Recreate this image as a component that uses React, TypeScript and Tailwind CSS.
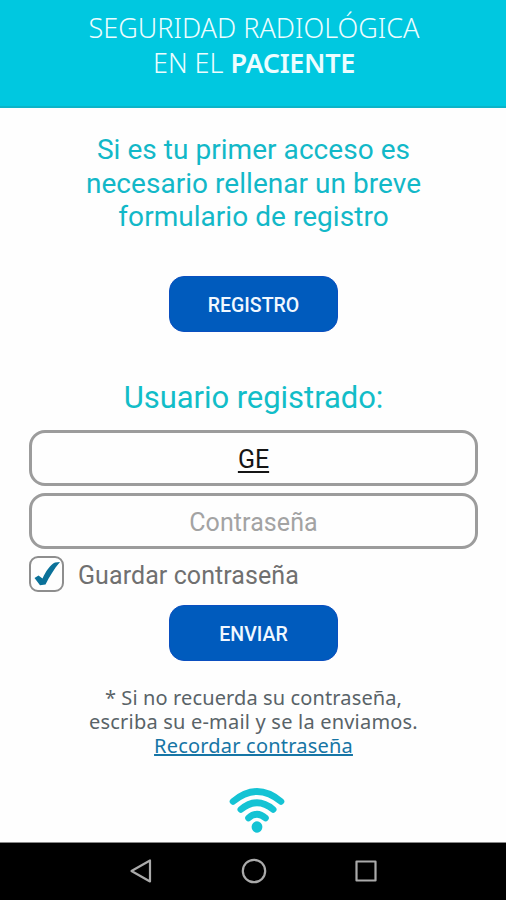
import React from 'react';

function ActionButton({ children }: { children: React.ReactNode }) {
  return (
    <button
      type="button"
      className="mx-auto block h-[56px] w-[169px] shrink-0 rounded-[15px] border border-[#0b4fc0] bg-[#005bbd] pt-[4px] text-[19.500px] font-medium text-[#f1f8ff]"
    >
      {children}
    </button>
  );
}

function WifiIcon() {
  return (
    <svg
      className="mx-auto block"
      width="58"
      height="46"
      viewBox="0 0 58 46"
      fill="none"
      stroke="#14c3d4"
      strokeWidth="6.600"
      strokeLinecap="round"
    >
      <path d="M5 14.500Q29 -5.500 53 14.500" />
      <path d="M12.800 22.500Q29 9 45.200 22.500" />
      <path d="M20.500 31Q29 23.500 37.500 31" />
      <ellipse cx="29" cy="40" rx="5.400" ry="5.700" fill="#14c3d4" stroke="none" />
    </svg>
  );
}

export default function App() {
  return (
    <div className="flex h-[900px] w-[506px] flex-col overflow-hidden bg-[#fefefe] font-[Roboto,sans-serif]">
      <header className="h-[108px] shrink-0 border-b-2 border-[#0bb4c8] bg-[#00c8e0] pt-[10px] pl-[2px] text-center font-['Noto_Sans',sans-serif] text-[27px] leading-[35px] font-light text-[#ecfdff]">
        <div className="whitespace-nowrap">SEGURIDAD RADIOLÓGICA</div>
        <div className="whitespace-nowrap">
          EN EL <span className="font-semibold tracking-[-0.3px]">PACIENTE</span>
        </div>
      </header>

      <main className="flex h-[734px] shrink-0 flex-col pr-[28px] pl-[29px]">
        <div className="mt-[25px] text-center text-[28px] leading-[33.500px] tracking-[0.04px] whitespace-nowrap text-[#12b8c8]">
          <div>Si es tu primer acceso es</div>
          <div>necesario rellenar un breve</div>
          <div>formulario de registro</div>
        </div>
        <div className="mt-[42px]">
          <ActionButton>REGISTRO</ActionButton>
        </div>
        <h2 className="mt-[48px] text-center text-[31px] leading-[36px] tracking-[-0.05px] text-[#12bdc8]">
          Usuario registrado:
        </h2>
        <div className="mt-[14px] flex h-[56px] shrink-0 items-center justify-center rounded-[16px] border-3 border-[#9c9c9c] pt-[5px] text-[25px] text-[#151515]">
          <span className="underline decoration-[1.500px] underline-offset-[3px]">GE</span>
        </div>
        <div className="mt-[7px] flex h-[56px] shrink-0 items-center justify-center rounded-[16px] border-3 border-[#9c9c9c] pt-[5px] text-[25px] tracking-[0.1px] text-[#a3a3a3]">
          Contraseña
        </div>
        <div className="mt-[7px] flex h-[36px] shrink-0 items-center gap-[15px] text-[25px] text-[#707070]">
          <span className="flex h-[36px] w-[35px] shrink-0 items-center justify-center rounded-[9px] border-2 border-[#8e8e8e]">
            <svg className="shrink-0" width="32" height="32" viewBox="0 0 32 32" fill="#0a7199">
              <path d="M3.500 20L7.500 17.500L11.500 20.500C15 13 19 7 24 4.500L29 4C23 11 18.500 18.500 14.500 26.500L9 27.300Z" />
            </svg>
          </span>
          <span className="-ml-px pt-[4px] tracking-[0.08px]">Guardar contraseña</span>
        </div>
        <div className="mt-[13px]">
          <ActionButton>ENVIAR</ActionButton>
        </div>
        <div className="mt-[25px] text-center font-['Noto_Sans',sans-serif] text-[20px] leading-[24px] tracking-[0.12px] whitespace-nowrap text-[#596368]">
          <div>* Si no recuerda su contraseña,</div>
          <div className="tracking-[0.2px]">escriba su e-mail y se la enviamos.</div>
          <div className="text-[#1675a5] underline decoration-2 tracking-[0.2px]">Recordar contraseña</div>
        </div>
        <div className="mt-[29px] pl-[7px]">
          <WifiIcon />
        </div>
      </main>

      <nav className="flex h-[58px] shrink-0 items-center justify-between border-t border-[#888] bg-black px-[129px] pb-[2px]">
        <svg width="24" height="26" viewBox="0 0 24 26" fill="none" stroke="#aaa" strokeWidth="2.200" strokeLinejoin="round">
          <path d="M2.500 13L21 2.500V23.500Z" />
        </svg>
        <svg width="26" height="26" viewBox="0 0 26 26" fill="none" stroke="#aaa" strokeWidth="2.200">
          <circle cx="13" cy="13" r="11.200" />
        </svg>
        <svg width="22" height="22" viewBox="0 0 22 22" fill="none" stroke="#aaa" strokeWidth="2.200" strokeLinejoin="round">
          <rect x="1.500" y="1.500" width="19" height="19" />
        </svg>
      </nav>
    </div>
  );
}
